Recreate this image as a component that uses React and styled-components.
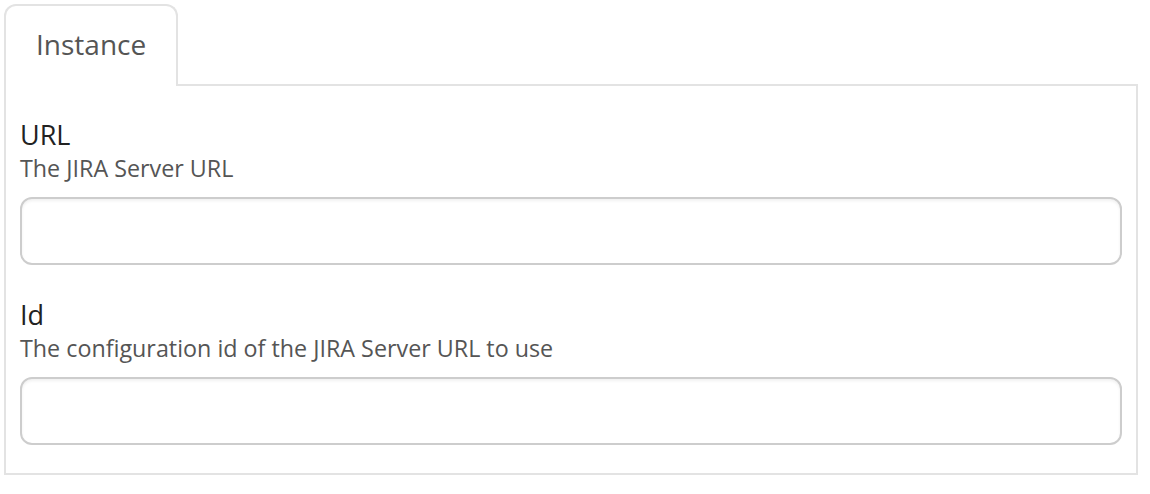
import React from 'react'
import styled, { createGlobalStyle } from 'styled-components'

const GlobalStyle = createGlobalStyle`
  body {
    margin: 0;
    background: #fff;
    font-family: "Open Sans", "Liberation Sans", sans-serif;
  }
`

const Page = styled.div`
  width: 1134px;
  padding: 4px 0 0 4px;
`

const TabBar = styled.div`
  display: flex;
  margin-bottom: -2px;
  position: relative;
  z-index: 1;
`

const Tab = styled.div`
  padding: 18px 30px 22px 30px;
  border: 2px solid #e3e3e3;
  border-bottom: none;
  border-radius: 12px 12px 0 0;
  background: #fff;
  font-size: 28px;
  line-height: 40px;
  color: #555;
`

const Panel = styled.div`
  border: 2px solid #e3e3e3;
  padding: 31px 14px 28px 14px;
  display: flex;
  flex-direction: column;
  gap: 32px;
`

const Field = styled.div`
  display: flex;
  flex-direction: column;
`

const Label = styled.label`
  font-size: 27px;
  line-height: 36px;
  color: #222;
`

const Hint = styled.div`
  font-size: 23.3px;
  line-height: 30px;
  color: #555;
  margin-bottom: 14px;
`

const Input = styled.input`
  box-sizing: border-box;
  width: 100%;
  height: 68px;
  border: 2px solid #cdcdcd;
  border-radius: 12px;
  box-shadow: inset 0 2px 3px rgba(0, 0, 0, 0.06);
  background: #fff;
  font-family: inherit;
  font-size: 24px;
  padding: 0 20px;
  outline: none;
`

const fields = [
  { label: 'URL', hint: 'The JIRA Server URL' },
  { label: 'Id', hint: 'The configuration id of the JIRA Server URL to use' },
]

export default function App() {
  return (
    <>
      <GlobalStyle />
      <Page>
        <TabBar>
          <Tab>Instance</Tab>
        </TabBar>
        <Panel>
          {fields.map((f) => (
            <Field key={f.label}>
              <Label>{f.label}</Label>
              <Hint>{f.hint}</Hint>
              <Input type="text" />
            </Field>
          ))}
        </Panel>
      </Page>
    </>
  )
}
